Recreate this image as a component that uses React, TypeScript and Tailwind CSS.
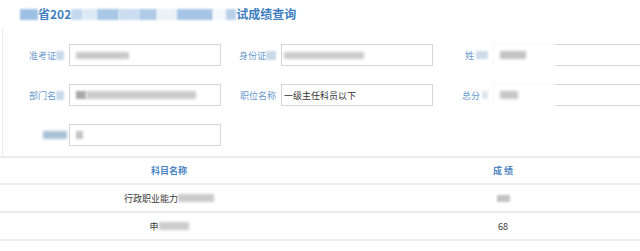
import React from "react";

const B = ({ c }: { c: string }) => <span className={`inline-block shrink-0 ${c}`} />;

const Field = ({
  label,
  children,
  hideLeft,
}: {
  label: React.ReactNode;
  children?: React.ReactNode;
  hideLeft?: boolean;
}) => (
  <div className="w-[212px] shrink-0 flex items-center">
    <div className="w-[60px] shrink-0 pr-[5px] flex items-center justify-end text-[9px] text-[#6a99cd] leading-none">
      {label}
    </div>
    <div className="relative w-[152px] h-[22px] shrink-0 border border-[#d6d6d6] bg-white flex items-center px-[6px] text-[9px] text-[#333] leading-none">
      {hideLeft && (
        <span className="absolute -left-[3px] -top-[3px] w-[64px] h-[28px] bg-white blur-[2px]" />
      )}
      <span className="relative flex items-center">{children}</span>
    </div>
  </div>
);

export default function App() {
  return (
    <div
      className="w-[640px] h-[251px] overflow-hidden bg-white"
      style={{ fontFamily: '"Noto Sans CJK SC", "Noto Sans", sans-serif' }}
    >
      <div className="w-[680px]">
        {/* Title */}
        <div className="h-[28px] flex items-center pl-[20px] text-[12px] font-bold text-[#3f7fc1] leading-none">
          <B c="w-[18px] h-[11px] bg-[#9dbfe3] blur-[1px]" />
          <span>省202</span>
          <B c="w-[12px] h-[11px] bg-[#c4d9ef] blur-[1px]" />
          <B c="w-[14px] h-[11px] bg-[#dde9f6] blur-[1px]" />
          <B c="w-[22px] h-[11px] bg-[#a9c7e7] blur-[1px]" />
          <B c="w-[20px] h-[11px] bg-[#c9dcf0] blur-[1px]" />
          <B c="w-[18px] h-[11px] bg-[#b0cbe8] blur-[1px]" />
          <B c="w-[20px] h-[11px] bg-[#eaf1f9] blur-[1px]" />
          <B c="w-[36px] h-[11px] bg-[#a6c4e5] blur-[1px]" />
          <B c="w-[13px] h-[11px] bg-[#f4f8fc] blur-[1px]" />
          <B c="w-[10px] h-[11px] bg-[#b9d0ea] blur-[1px]" />
          <span>试成绩查询</span>
        </div>

        {/* Form panel */}
        <div className="ml-[2px] border-l border-[#ececec] pt-[16px] pb-[10px] flex flex-col gap-[18px]">
          <div className="flex pl-[6px]">
            <Field
              label={
                <>
                  <span>准考证</span>
                  <B c="w-[8px] h-[9px] bg-[#c9d9ea] blur-[1px]" />
                </>
              }
            >
              <B c="w-[53px] h-[7px] bg-[#c8c8c8] blur-[1.5px]" />
            </Field>
            <Field
              label={
                <>
                  <span>身份证</span>
                  <B c="w-[10px] h-[9px] bg-[#c9d9ea] blur-[1px]" />
                </>
              }
            >
              <B c="w-[80px] h-[7px] bg-[#cbcbcb] blur-[1.5px] -ml-[4px]" />
            </Field>
            <Field
              hideLeft
              label={
                <>
                  <span>姓</span>
                  <B c="w-[12px] h-[8px] bg-[#cddbe8] blur-[1px] ml-[2px]" />
                </>
              }
            >
              <B c="w-[26px] h-[8px] bg-[#c3c3c3] blur-[1.5px]" />
            </Field>
          </div>

          <div className="flex pl-[6px]">
            <Field
              label={
                <>
                  <span>部门名</span>
                  <B c="w-[8px] h-[9px] bg-[#c9d9ea] blur-[1px]" />
                </>
              }
            >
              <B c="w-[10px] h-[8px] bg-[#a9a9a9] blur-[1px]" />
              <B c="w-[110px] h-[8px] bg-[#cbcbcb] blur-[1.5px]" />
            </Field>
            <Field label={<span>职位名称</span>}>
              <span className="-ml-[4px]">一级主任科员以下</span>
            </Field>
            <Field
              hideLeft
              label={
                <>
                  <span>总分</span>
                  <B c="w-[6px] h-[8px] bg-[#dde6ef] blur-[1px] ml-[2px]" />
                </>
              }
            >
              <B c="w-[18px] h-[8px] bg-[#c6c6c6] blur-[1.5px]" />
            </Field>
          </div>

          <div className="flex pl-[6px]">
            <Field
              label={
                <B c="w-[24px] h-[8px] bg-[#a9bfd6] blur-[1.5px] mr-[-3px]" />
              }
            >
              <B c="w-[7px] h-[8px] bg-[#c6c6c6] blur-[1px]" />
            </Field>
          </div>
        </div>

        {/* Table */}
        <div className="border-t-2 border-[#ebebeb] text-[9px] leading-none">
          <div className="grid grid-cols-[338px_330px] h-[27px] border-b-2 border-[#ebebeb] items-center font-bold text-[#4a84c2]">
            <div className="text-center">科目名称</div>
            <div className="text-center">成 绩</div>
          </div>
          <div className="grid grid-cols-[338px_330px] h-[28px] border-b-2 border-[#ebebeb] items-center text-[#3a3a3a]">
            <div className="flex justify-center items-center">
              <span>行政职业能力</span>
              <B c="w-[36px] h-[8px] bg-[#c9c9c9] blur-[1.5px]" />
            </div>
            <div className="flex justify-center">
              <B c="w-[13px] h-[7px] bg-[#c4c4c4] blur-[1px]" />
            </div>
          </div>
          <div className="grid grid-cols-[338px_330px] h-[28px] border-b-2 border-[#ebebeb] items-center text-[#3a3a3a]">
            <div className="flex justify-center items-center">
              <span>申</span>
              <B c="w-[30px] h-[8px] bg-[#cbcbcb] blur-[1.5px]" />
            </div>
            <div className="text-center">68</div>
          </div>
        </div>
      </div>
    </div>
  );
}
